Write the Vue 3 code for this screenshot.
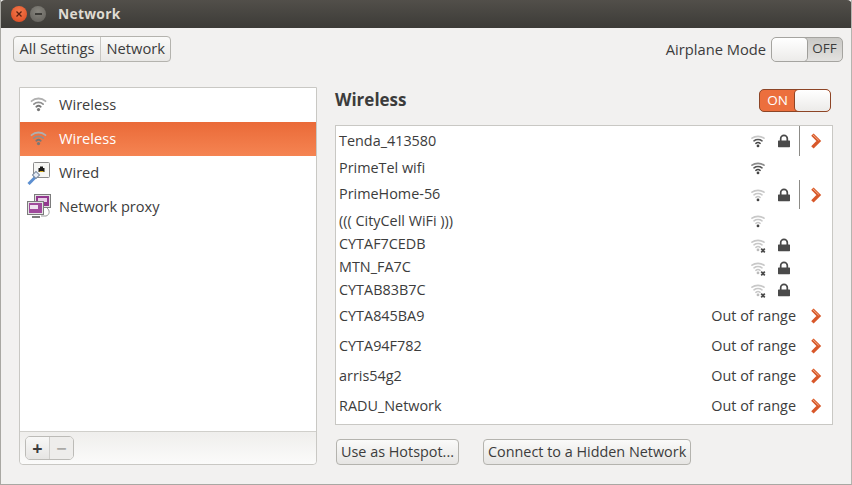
<script setup>
const sidebar = [
  { name: 'Wireless', icon: 'wifi' },
  { name: 'Wireless', icon: 'wifi', active: true },
  { name: 'Wired', icon: 'wired' },
  { name: 'Network proxy', icon: 'proxy' }
]

const networks = [
  { name: 'Tenda_413580', h: 30, wifi: 'mid', lock: true, sep: true },
  { name: 'PrimeTel wifi', h: 24, wifi: 'strong' },
  { name: 'PrimeHome-56', h: 29, wifi: 'weak', lock: true, sep: true },
  { name: '((( CityCell WiFi )))', h: 24, wifi: 'weak' },
  { name: 'CYTAF7CEDB', h: 23, wifi: 'off', lock: true },
  { name: 'MTN_FA7C', h: 23, wifi: 'off', lock: true },
  { name: 'CYTAB83B7C', h: 22, wifi: 'off', lock: true },
  { name: 'CYTA845BA9', h: 30, range: true },
  { name: 'CYTA94F782', h: 30, range: true },
  { name: 'arris54g2', h: 30, range: true },
  { name: 'RADU_Network', h: 30, range: true }
]
</script>

<template>
  <div class="window">
    <header class="titlebar">
      <span class="wm close">
        <svg width="8" height="8" viewBox="0 0 8 8"><path d="M1.5 1.5l5 5M6.5 1.5l-5 5" stroke="#5a2010" stroke-width="1.3" /></svg>
      </span>
      <span class="wm min"><i></i></span>
      <span class="title">Network</span>
    </header>

    <div class="toolbar">
      <div class="crumbs">
        <span class="crumb">All Settings</span>
        <span class="crumb">Network</span>
      </div>
      <div class="airplane">
        <span>Airplane Mode</span>
        <div class="switch off">
          <span class="knob"></span>
          <span class="state">OFF</span>
        </div>
      </div>
    </div>

    <main class="content">
      <section class="side">
        <ul class="side-list">
          <li v-for="(item, i) in sidebar" :key="i" class="side-item" :class="{ active: item.active }">
            <span class="side-icon">
              <svg v-if="item.icon === 'wifi'" width="18" height="16" viewBox="0 0 18 16" fill="none" stroke-linecap="round">
                <path d="M1.5 5.2C5.5 1.6 11.5 1.6 15.5 5.2" stroke="#b0b0b0" stroke-width="1.8" />
                <path d="M3.9 8.1C6.5 5.9 10.5 5.9 13.1 8.1" stroke="#8f8f8f" stroke-width="1.8" />
                <path d="M6.3 10.7C7.5 9.7 9.5 9.7 10.7 10.7" stroke="#777" stroke-width="1.8" />
                <circle cx="8.5" cy="13.6" r="1.6" fill="#777" />
              </svg>
              <svg v-else-if="item.icon === 'wired'" width="26" height="26" viewBox="0 0 26 26" fill="none">
                <rect x="7.5" y="3.5" width="16" height="15" rx="1" fill="#f6f6f4" stroke="#8c8c8c" />
                <path d="M12.5 13V9h1.5V7.5h3V9h1.5v4z" fill="#1a1a1a" />
                <path d="M13.5 12.5h4" stroke="#d8b020" />
                <path d="M2.5 25l7-7" stroke="#5c8fd0" stroke-width="3" />
                <rect x="7.5" y="13.5" width="5" height="5" fill="#e6ecf4" stroke="#7a8aa0" transform="rotate(45 10 16)" />
              </svg>
              <svg v-else width="26" height="26" viewBox="0 0 26 26" fill="none">
                <rect x="8.5" y="1.5" width="16" height="13" fill="#e2e2e2" stroke="#7c7c7c" />
                <rect x="10" y="3" width="13" height="10" fill="#93398f" />
                <rect x="12" y="5" width="9" height="4" fill="#e8d0e8" />
                <path d="M21 15c3 2 3 7-1 8h-5" stroke="#999" />
                <rect x="1.5" y="8.5" width="16" height="13" fill="#e2e2e2" stroke="#7c7c7c" />
                <rect x="3" y="10" width="13" height="10" fill="#a04a9c" />
                <rect x="4" y="12" width="8" height="4" fill="#f0e0f0" />
                <path d="M6 24h8" stroke="#7c7c7c" stroke-width="2" />
              </svg>
            </span>
            <span class="side-name">{{ item.name }}</span>
          </li>
        </ul>
        <div class="side-actions">
          <div class="plusminus">
            <span class="pm plus">+</span>
            <span class="pm minus">−</span>
          </div>
        </div>
      </section>

      <section class="detail">
        <div class="detail-head">
          <h2>Wireless</h2>
          <div class="switch on">
            <span class="state">ON</span>
            <span class="knob"></span>
          </div>
        </div>

        <div class="net-list">
          <div v-for="net in networks" :key="net.name" class="net" :style="{ height: net.h + 'px' }">
            <span class="net-name">{{ net.name }}</span>
            <span v-if="net.range" class="range">Out of range</span>
            <span v-if="net.wifi" class="signal">
              <svg width="18" height="16" viewBox="0 0 18 16" fill="none" stroke-linecap="round">
                <path d="M3 5.2C6.2 2.7 11.8 2.7 15 5.2" :stroke="net.wifi === 'strong' ? '#8a8a8a' : '#c8c8c8'" stroke-width="1.6" />
                <path d="M5 7.8C7.2 6.2 10.8 6.2 13 7.8" :stroke="net.wifi === 'strong' || net.wifi === 'mid' ? '#555' : '#c8c8c8'" stroke-width="1.6" />
                <path d="M6.9 10.3C8 9.5 10 9.5 11.1 10.3" :stroke="net.wifi === 'off' || net.wifi === 'weak' ? '#c8c8c8' : '#444'" stroke-width="1.6" />
                <circle cx="9" cy="12.9" r="1.4" :fill="net.wifi === 'off' ? '#bbb' : '#444'" />
                <path v-if="net.wifi === 'off'" d="M12.2 11.7l3.6 3.6M15.8 11.7l-3.6 3.6" stroke="#4a4a4a" stroke-width="1.7" stroke-linecap="butt" />
              </svg>
            </span>
            <span v-if="net.wifi" class="lock">
              <svg v-if="net.lock" width="14" height="14" viewBox="0 0 14 14" fill="none">
                <path d="M3.7 7V4.6a3.3 3.3 0 0 1 6.6 0V7" stroke="#4a4a4a" stroke-width="1.7" />
                <rect x="1" y="6.4" width="12" height="6.8" rx=".6" fill="#4a4a4a" />
              </svg>
            </span>
            <span class="arrow-cell" :class="{ sep: net.sep }">
              <svg v-if="net.sep || net.range" width="12" height="16" viewBox="0 0 12 16" fill="none">
                <path d="M2.4 1.6l6.4 6.4-6.4 6.4" stroke="#d8582a" stroke-width="3.4" stroke-linejoin="miter" />
                <path d="M2.2 1.2l6.6 6.2" stroke="#f4b088" stroke-width="1" />
              </svg>
            </span>
          </div>
        </div>

        <div class="detail-actions">
          <button class="btn">Use as Hotspot...</button>
          <button class="btn">Connect to a Hidden Network</button>
        </div>
      </section>
    </main>
  </div>
</template>

<style>
html, body {
  margin: 0;
  background: #f2f1f0;
}
</style>

<style scoped>
.window {
  width: 852px;
  height: 485px;
  box-sizing: border-box;
  display: flex;
  flex-direction: column;
  background: #f2f1f0;
  border-left: 1px solid #a9a8a3;
  border-right: 1px solid #b5b4af;
  border-bottom: 1px solid #a9a8a3;
  font-family: "Open Sans", "Noto Sans", sans-serif;
  font-size: 14.4px;
  color: #3c3c3c;
  overflow: hidden;
}
.titlebar {
  height: 28px;
  margin: 0 -1px;
  flex: none;
  display: flex;
  align-items: center;
  padding: 0 0 1px 11px;
  box-sizing: border-box;
  gap: 3px;
  background: linear-gradient(#524f4a, #3c3b37);
  border-radius: 5px 5px 0 0;
}
.wm {
  width: 16px;
  height: 16px;
  border-radius: 50%;
  display: flex;
  align-items: center;
  justify-content: center;
}
.close {
  background: radial-gradient(circle at 50% 35%, #f47a4c, #d9471f);
}
.min {
  background: radial-gradient(circle at 50% 35%, #88867f, #5f5d58);
}
.min i {
  width: 7px;
  height: 2px;
  background: #3c3b37;
}
.title {
  margin-left: 9px;
  color: #dfdbd2;
  font-weight: 700;
  font-size: 13.8px;
  letter-spacing: 0.3px;
}
.toolbar {
  flex: none;
  display: flex;
  align-items: center;
  justify-content: space-between;
  height: 42px;
  box-sizing: border-box;
  padding: 0 8px 0 12px;
}
.crumbs {
  display: flex;
  height: 26px;
  box-sizing: border-box;
  border: 1px solid #b4b3ae;
  border-radius: 4px;
  background: linear-gradient(#fafaf9, #e9e8e6);
}
.crumb {
  padding: 0 5.5px;
  line-height: 23px;
  font-size: 14.7px;
}
.crumb + .crumb {
  border-left: 1px solid #c8c7c3;
}
.airplane {
  display: flex;
  align-items: center;
  gap: 5px;
  font-size: 14.7px;
}
.switch {
  width: 72px;
  height: 25px;
  box-sizing: border-box;
  display: flex;
  border-radius: 5px;
  font-size: 13.5px;
  overflow: hidden;
}
.switch.off {
  border: 1px solid #a5a4a0;
  background: linear-gradient(#c9c8c5, #e3e2e0);
}
.switch.on {
  height: 23px;
  margin: 2px 2px 0 0;
  border: 1px solid #8d4526;
  background: #ec6f3d;
  color: #fff;
}
.knob {
  width: 35px;
  background: linear-gradient(#ffffff, #ecebe9);
  border-radius: 4px;
  box-shadow: 0 0 0 1px #9f9e9a;
}
.switch.on .knob {
  box-shadow: 0 0 0 1px #8d4526;
}
.state {
  flex: 1;
  text-align: center;
  line-height: 21px;
}
.content {
  flex: 1;
  display: flex;
  padding: 17px 18px 19px 18px;
  gap: 18px;
  min-height: 0;
}
.side {
  width: 298px;
  flex: none;
  box-sizing: border-box;
  display: flex;
  flex-direction: column;
  border: 1px solid #c9c8c4;
  border-radius: 0 0 4px 4px;
  background: #fff;
}
.side-list {
  flex: 1;
  list-style: none;
  margin: 0;
  padding: 0;
}
.side-item {
  height: 34px;
  display: flex;
  align-items: center;
  font-size: 14.6px;
}
.side-item.active {
  background: linear-gradient(#ea6a38, #f58452);
  color: #fff;
}
.side-name {
  padding-bottom: 2px;
}
.side-icon {
  width: 39px;
  display: flex;
  justify-content: center;
  flex: none;
  padding-bottom: 2px;
  padding-right: 2px;
  box-sizing: border-box;
}
.side-actions {
  height: 33px;
  flex: none;
  box-sizing: border-box;
  display: flex;
  align-items: center;
  padding: 0 5px;
  border-top: 1px solid #d0cfcb;
  background: linear-gradient(#efeeec, #fbfbfa);
  border-radius: 0 0 4px 4px;
}
.plusminus {
  display: flex;
  height: 24px;
  box-sizing: border-box;
  border: 1px solid #bcbbb7;
  border-radius: 5px;
}
.pm {
  width: 23px;
  text-align: center;
  font-size: 18px;
  line-height: 22px;
  font-weight: 700;
}
.plus {
  background: linear-gradient(#f8f8f7, #e6e5e3);
  border-right: 1px solid #cfcecb;
  border-radius: 4px 0 0 4px;
}
.minus {
  color: #aaa9a6;
  background: #eeedeb;
  border-radius: 0 4px 4px 0;
}
.detail {
  flex: 1;
  min-width: 0;
  display: flex;
  flex-direction: column;
}
.detail-head {
  height: 38px;
  flex: none;
  display: flex;
  align-items: flex-start;
  justify-content: space-between;
}
.detail-head h2 {
  margin: 0;
  font-size: 17px;
  font-weight: 700;
  line-height: 26px;
}
.net-list {
  height: 300px;
  flex: none;
  box-sizing: border-box;
  border: 1px solid #c9c8c4;
  background: #fff;
}
.net {
  display: flex;
  align-items: center;
  padding-left: 3px;
}
.net-name {
  flex: 1;
  min-width: 0;
  padding-bottom: 2px;
}
.range {
  margin-right: 3px;
  padding-bottom: 2px;
}
.signal {
  width: 18px;
  height: 16px;
  margin-right: 10px;
}
.lock {
  width: 14px;
  height: 14px;
  margin: 0 8px 2px 0;
}
.arrow-cell {
  width: 33px;
  height: 100%;
  box-sizing: border-box;
  display: flex;
  align-items: center;
  justify-content: center;
}
.arrow-cell.sep {
  border-left: 1px solid #8c8b87;
}
.detail-actions {
  display: flex;
  gap: 24px;
  margin-top: 14px;
  padding-left: 1px;
}
.btn {
  height: 26px;
  padding: 0 4px 2px;
  border: 1px solid #b4b3ae;
  border-radius: 4px;
  background: linear-gradient(#fafaf9, #e6e5e3);
  font-family: inherit;
  font-size: 14.4px;
  color: #3c3c3c;
}
</style>
